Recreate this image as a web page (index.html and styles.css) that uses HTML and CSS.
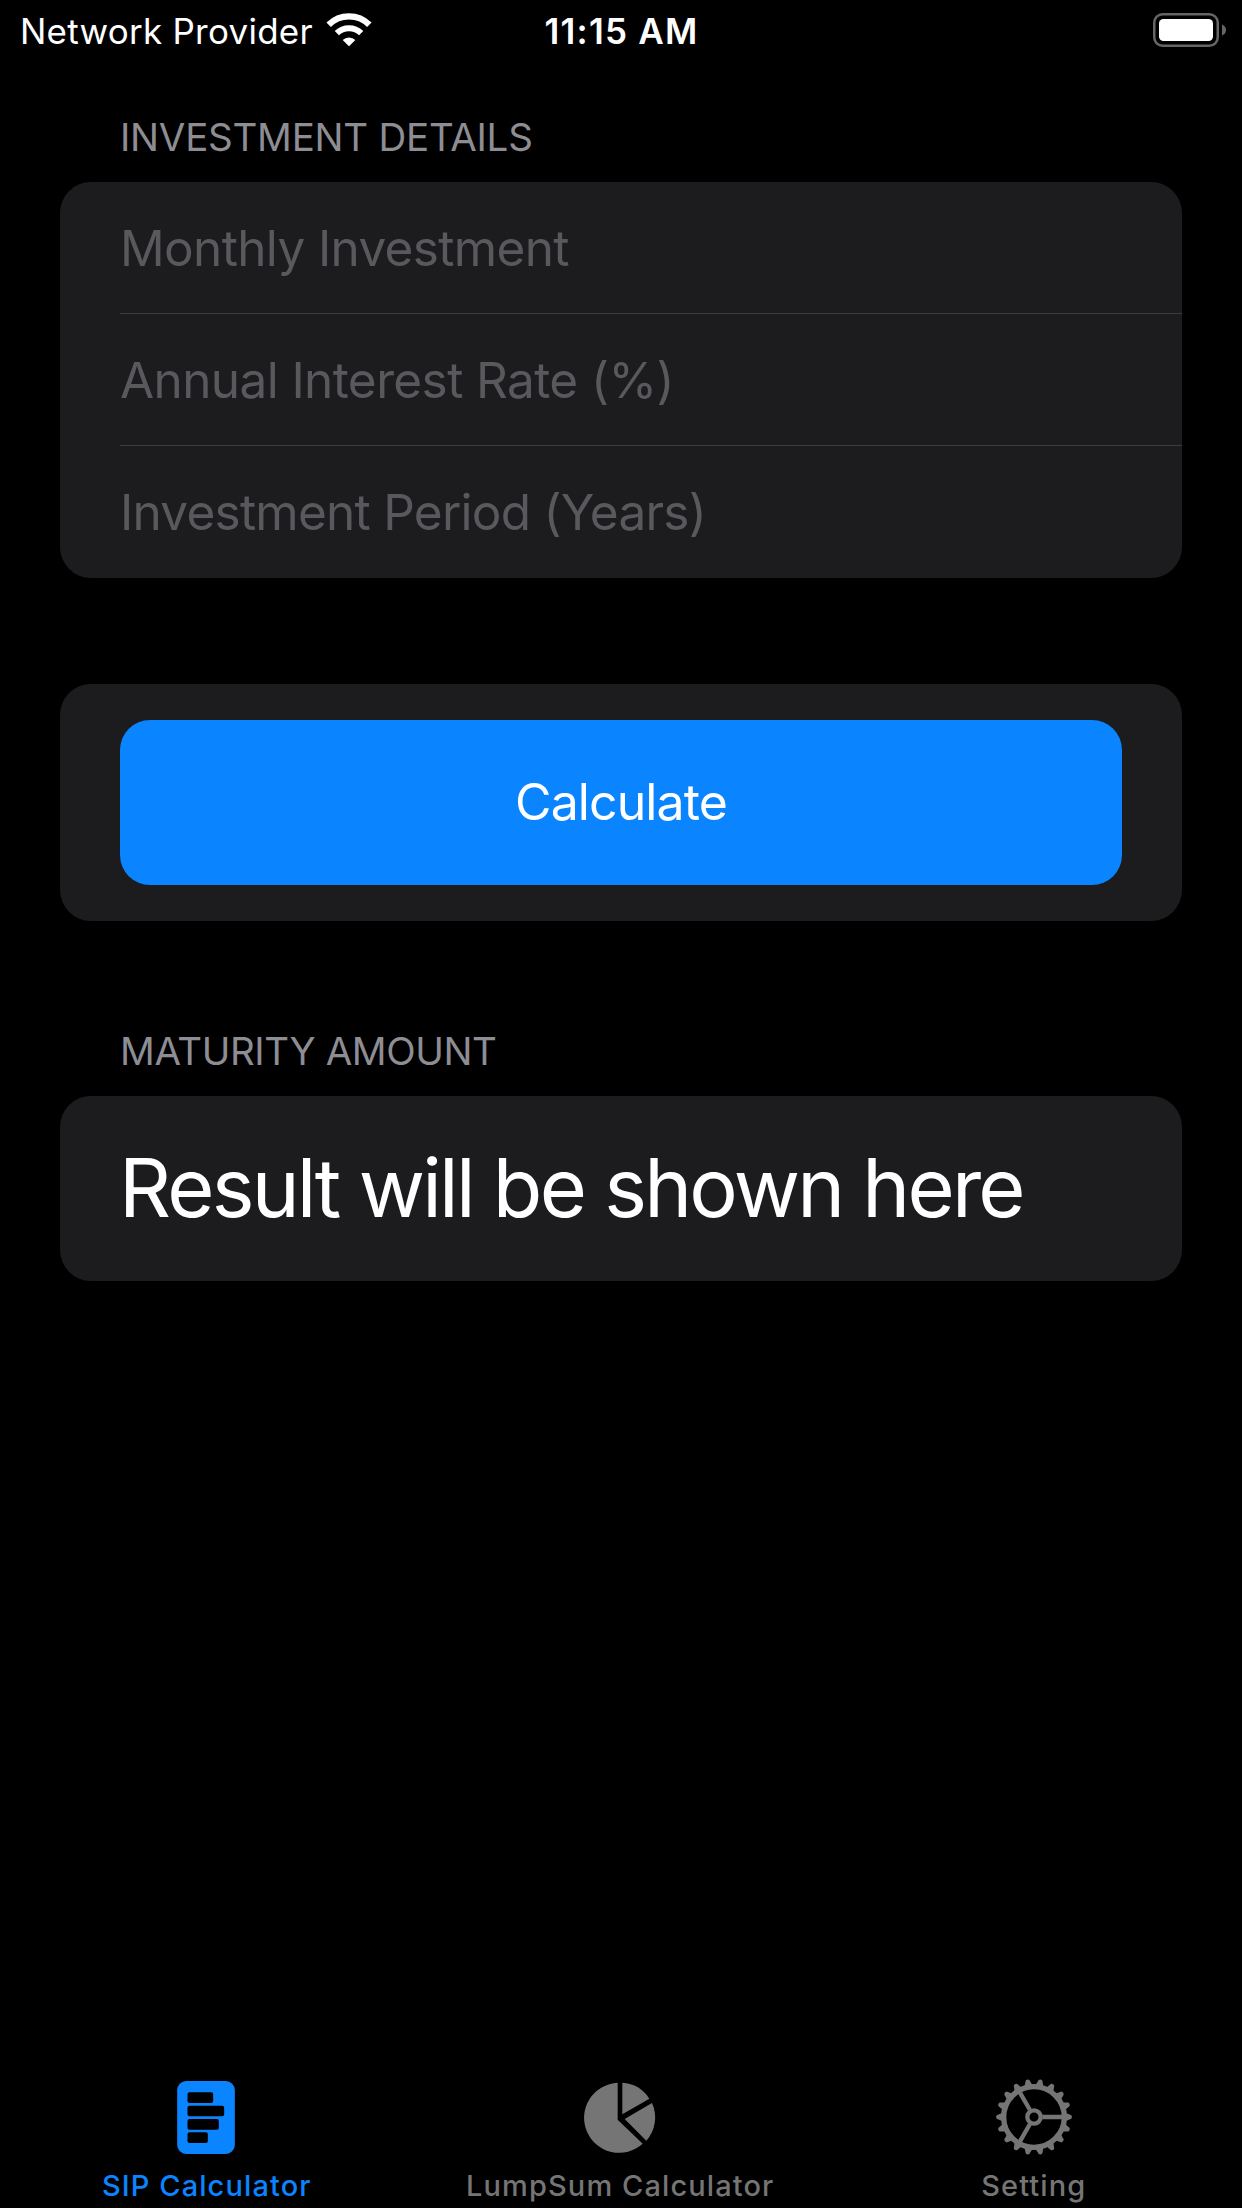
FILE: index.html
```html
<!DOCTYPE html>
<html lang="en">
<head>
<meta charset="utf-8">
<title>SIP Calculator</title>
<link rel="stylesheet" href="styles.css">
</head>
<body>
<div class="screen">
  <header class="status-bar">
    <div class="carrier">
      <span class="carrier-name">Network Provider</span>
      <svg class="wifi" viewBox="0 0 138 100" fill="none" stroke="#fff">
        <path d="M8 35.500A86.500 86.500 0 0 1 130 35.500" stroke-width="19"/>
        <path d="M32.500 60.500A52 52 0 0 1 105.500 60.500" stroke-width="18"/>
        <path d="M69 100L50 81A27 27 0 0 1 88 81Z" fill="#fff" stroke="none"/>
      </svg>
    </div>
    <span class="clock">11:15 AM</span>
    <div class="battery"><svg viewBox="0 0 74 34" width="74" height="34">
      <rect x="1.250" y="1.250" width="63.500" height="31.500" rx="8.500" fill="none" stroke="#666" stroke-width="2.500"/>
      <rect x="6" y="6" width="54" height="22" rx="4.500" fill="#fff"/>
      <path d="M69 11.500Q73 13 73 17T69 22.500Z" fill="#666"/>
    </svg></div>
  </header>

  <main class="form">
    <h2 class="section-title title-details">Investment Details</h2>
    <section class="card">
      <div class="field amount">Monthly Investment</div>
      <div class="field rate">Annual Interest Rate (%)</div>
      <div class="field period">Investment Period (Years)</div>
    </section>

    <section class="card action-card">
      <button class="calculate">Calculate</button>
    </section>

    <h2 class="section-title title-maturity">Maturity Amount</h2>
    <section class="card result-card">Result will be shown here</section>
  </main>

  <nav class="tab-bar">
    <a class="tab active">
      <svg class="tab-icon" viewBox="0 0 300 270" fill="currentColor">
        <path transform="translate(9.500 0)" fill-rule="evenodd" d="M78 42H197A27 27 0 0 1 224 69V234A27 27 0 0 1 197 261H78A27 27 0 0 1 51 234V69A27 27 0 0 1 78 42ZM88 76a6 6 0 0 0-6 6v20a6 6 0 0 0 6 6h65a6 6 0 0 0 6-6v-20a6 6 0 0 0-6-6ZM88 116a6 6 0 0 0-6 6v20a6 6 0 0 0 6 6h98a6 6 0 0 0 6-6v-20a6 6 0 0 0-6-6ZM88 156a6 6 0 0 0-6 6v20a6 6 0 0 0 6 6h82a6 6 0 0 0 6-6v-20a6 6 0 0 0-6-6ZM88 196a6 6 0 0 0-6 6v20a6 6 0 0 0 6 6h49a6 6 0 0 0 6-6v-20a6 6 0 0 0-6-6Z"/>
      </svg>
      <span class="tab-label">SIP Calculator</span>
    </a>
    <a class="tab">
      <svg class="tab-icon" viewBox="-2 0 300 270" fill="currentColor">
        <path d="M141 47.500A105 105 0 1 0 216 230L141 158Z"/>
        <path d="M155 47.500A105 105 0 0 1 236 95L155 142Z"/>
        <path d="M244 108A105 105 0 0 1 227 221L162 156Z"/>
      </svg>
      <span class="tab-label">LumpSum Calculator</span>
    </a>
    <a class="tab">
      <svg class="tab-icon" viewBox="0 0 300 270" fill="none" stroke="currentColor">
        <defs>
          <path id="tooth" d="M93 -13L98 -11L112 -5.500Q116 0 112 5.500L98 11L93 13Z" fill="currentColor" stroke="none"/>
          <g id="teeth3"><use href="#tooth"/><use href="#tooth" transform="rotate(20)"/><use href="#tooth" transform="rotate(40)"/></g>
        </defs>
        <g transform="translate(150 150)">
          <circle r="91" stroke-width="16"/>
          <circle r="20" stroke-width="13"/>
          <path d="M25 0H86M-12.500 -21.650L-43 -74.480M-12.500 21.650L-43 74.480" stroke-width="13"/>
          <use href="#teeth3"/><use href="#teeth3" transform="rotate(60)"/><use href="#teeth3" transform="rotate(120)"/><use href="#teeth3" transform="rotate(180)"/><use href="#teeth3" transform="rotate(240)"/><use href="#teeth3" transform="rotate(300)"/>
        </g>
      </svg>
      <span class="tab-label">Setting</span>
    </a>
  </nav>
</div>
</body>
</html>
```
FILE: styles.css
```css
* { box-sizing: border-box; }
body { margin: 0; background: #000; color: #fff; font-family: Inter, "Liberation Sans", sans-serif; }
.screen { width: 1242px; height: 2208px; display: flex; flex-direction: column; overflow: hidden; }
.status-bar { height: 60px; display: grid; grid-template-columns: 1fr auto 1fr; padding: 0 15px 0 20px; }
.carrier { display: flex; align-items: flex-start; gap: 13px; }
.carrier-name, .clock { font-size: 35px; line-height: 62px; white-space: nowrap; }
.carrier-name { letter-spacing: 0.25px; }
.clock { font-weight: 600; letter-spacing: 1.25px; margin-left: -4px; }
.wifi { width: 46px; height: 33.330px; margin-top: 13px; }
.battery { display: flex; justify-content: flex-end; padding-top: 13px; }
.form { flex: 1; padding: 0 60px; }
.section-title { margin: 0; padding: 0 60px; height: 122px; font-size: 38.500px; font-weight: 400; line-height: 154px; letter-spacing: -0.25px; text-transform: uppercase; color: #8d8d93; white-space: nowrap; }
.card { background: #1c1c1e; border-radius: 31px; }
.field { height: 132px; margin-left: 60px; border-bottom: 1px solid #3d3d41; font-size: 49.500px; line-height: 132px; color: #59595d; white-space: nowrap; }
.field:last-child { border-bottom: 0; }
.amount { letter-spacing: -0.65px; }
.rate { letter-spacing: -0.6px; }
.period { letter-spacing: -0.75px; }
.action-card { margin-top: 106px; padding: 36px 60px; height: 237px; }
.calculate { display: block; width: 100%; height: 165px; padding: 0 0 2px; border: 0; border-radius: 30px; background: #0a84ff; color: #fff; font: inherit; font-size: 50px; letter-spacing: -0.9px; }
.title-maturity { height: 175px; line-height: 260px; letter-spacing: -0.4px; }
.result-card { height: 185px; padding-left: 59px; font-size: 81px; letter-spacing: -2.75px; line-height: 185px; white-space: nowrap; }
.tab-bar { height: 141px; display: grid; grid-template-columns: repeat(3, 413.500px); color: #757575; }
.tab { display: flex; flex-direction: column; align-items: center; }
.tab-icon { width: 100px; height: 90px; }
.tab-label { font-size: 29px; font-weight: 500; line-height: 58px; letter-spacing: 1.1px; white-space: nowrap; }
.active { color: #0a84ff; }
```
